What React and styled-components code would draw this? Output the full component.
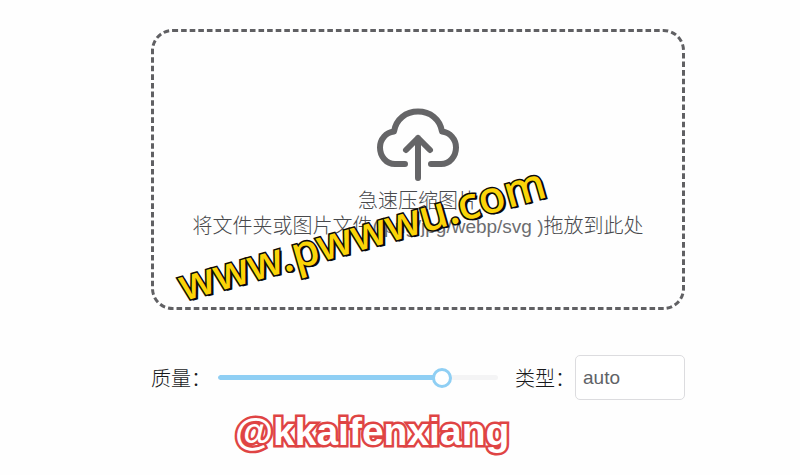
import React, { useState } from "react";
import styled, { createGlobalStyle } from "styled-components";

const GlobalStyle = createGlobalStyle`
  *, *::before, *::after { box-sizing: border-box; }
  body {
    margin: 0;
    background: #fefefe;
    color: #18191b;
    font-family: "Liberation Sans", "Noto Sans CJK SC", sans-serif;
  }
`;

const Page = styled.main`
  position: relative;
  display: flex;
  flex-direction: column;
  gap: 45px;
  padding: 29px 115px 75px 151px;
`;

const DropZone = styled.section`
  position: relative;
  display: flex;
  flex-direction: column;
  align-items: center;
  padding: 78px 16px 71px;
  color: #48494c;
`;

const DashedFrame = styled.svg`
  position: absolute;
  inset: 0;
  width: 100%;
  height: 100%;
  overflow: visible;

  rect {
    x: 1.5px;
    y: 1.5px;
    width: calc(100% - 3px);
    height: calc(100% - 3px);
    rx: 20px;
    fill: none;
    stroke: #606063;
    stroke-width: 3;
    stroke-dasharray: 5.6 3;
  }
`;

const UploadIcon = styled.svg`
  display: block;
  width: 84px;
  height: 76px;
  fill: none;
  stroke: #656567;
  stroke-width: 6;
  stroke-linecap: round;
  stroke-linejoin: round;
`;

const Hint = styled.p`
  margin: 0;
  padding-top: 6px;
  font-size: 20px;
  font-weight: 300;
  line-height: 25px;
  text-align: center;
  white-space: nowrap;
`;

const Formats = styled.span`
  color: #6c6d70;
  font-size: 19px;
`;

const Controls = styled.form`
  display: flex;
  align-items: center;
`;

const Label = styled.label`
  flex: none;
  width: ${(p) => p.$width};
  padding-top: 2px;
  font-size: 20px;
  font-weight: 300;
  line-height: 28px;
  white-space: nowrap;
`;

const Slider = styled.div`
  flex: 1;
  display: grid;
  align-items: center;
  margin-right: 17px;

  > * { grid-area: 1 / 1; }
`;

const Rail = styled.div`
  height: 5px;
  border-radius: 3px;
  background: #f4f4f5;
  overflow: hidden;
`;

const Fill = styled.div`
  height: 100%;
  border-radius: 3px;
  background: #8fcff4;
`;

const Range = styled.input`
  appearance: none;
  width: calc(100% + 20px);
  height: 20px;
  margin: 0 -10px;
  background: transparent;
  cursor: pointer;

  &::-webkit-slider-thumb {
    appearance: none;
    width: 20px;
    height: 20px;
    border: 3px solid #8fcff4;
    border-radius: 50%;
    background: #fff;
  }
`;

const Select = styled.select`
  appearance: none;
  flex: none;
  width: 110px;
  height: 45px;
  padding: 0 7px;
  border: 1px solid #dcdcdf;
  border-radius: 5px;
  background: #fff;
  color: #606266;
  font: 19px "Liberation Sans", sans-serif;
`;

const SiteMark = styled.div`
  position: absolute;
  left: 186px;
  top: 259px;
  transform: rotate(-16deg);
  transform-origin: 0 100%;
  color: #fbd408;
  font: 500 44px/50px "Noto Sans", sans-serif;
  white-space: nowrap;
  -webkit-text-stroke: 3px #0a0a0a;
  paint-order: stroke fill;
  text-shadow: 2px 2px 0 #0a0a0a;
  pointer-events: none;
`;

const AuthorMark = styled.div`
  position: absolute;
  left: 235px;
  top: 411px;
  color: #fff;
  font: bold 39px/42px "Liberation Sans", sans-serif;
  white-space: nowrap;
  -webkit-text-stroke: 5px #df4444;
  paint-order: stroke fill;
  pointer-events: none;
`;

export default function App() {
  const [quality, setQuality] = useState(80);
  const [type, setType] = useState("auto");

  return (
    <>
      <GlobalStyle />
      <Page lang="zh-CN">
        <DropZone>
          <DashedFrame aria-hidden="true">
            <rect />
          </DashedFrame>
          <UploadIcon viewBox="0 0 84 76" aria-hidden="true">
            <path d="M29 57H19C10 57 4 49 4 40.500C4 32 10 25.500 18 24.500C20 12 30 4.500 42 4.500S64 12 66 24.500C74 25.500 80 32 80 40.500C80 49 74 57 65 57H55" />
            <path d="M42 71V31M30 43L42 31L54 43" />
          </UploadIcon>
          <Hint>
            急速压缩图片
            <br />
            将文件夹或图片文件<Formats>( png/jpg/webp/svg )</Formats>拖放到此处
          </Hint>
        </DropZone>

        <Controls>
          <Label htmlFor="quality" $width="67px">质量：</Label>
          <Slider>
            <Rail>
              <Fill style={{ width: `${quality}%` }} />
            </Rail>
            <Range
              id="quality"
              type="range"
              min="0"
              max="100"
              value={quality}
              onChange={(e) => setQuality(Number(e.target.value))}
            />
          </Slider>
          <Label htmlFor="type" $width="60px">类型：</Label>
          <Select id="type" value={type} onChange={(e) => setType(e.target.value)}>
            <option value="auto">auto</option>
            <option value="png">png</option>
            <option value="jpg">jpg</option>
            <option value="webp">webp</option>
            <option value="svg">svg</option>
          </Select>
        </Controls>

        <SiteMark>www.pwwwu.com</SiteMark>
        <AuthorMark>@kkaifenxiang</AuthorMark>
      </Page>
    </>
  );
}
